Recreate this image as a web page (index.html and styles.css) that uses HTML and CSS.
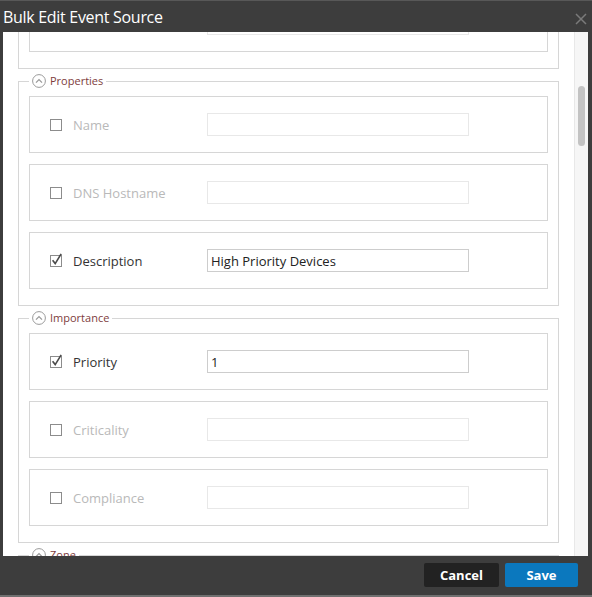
FILE: index.html
```html
<!DOCTYPE html>
<html>
<head>
<meta charset="utf-8">
<link rel="stylesheet" href="styles.css">
</head>
<body>
<div class="dialog">
  <header class="titlebar">
    <h1 class="title">Bulk Edit Event Source</h1>
    <svg class="close" width="12" height="12" viewBox="0 0 12 12"><path d="M1 1L11 11M11 1L1 11" stroke="#7a7a7a" stroke-width="1.5" fill="none"/></svg>
  </header>
  <div class="main">
    <div class="content">
      <fieldset class="group first">
        <legend><span class="leg"><svg width="14" height="14" viewBox="0 0 14 14"><circle cx="7" cy="7" r="6.4" fill="none" stroke="#9a9a9a"/><path d="M4 8.6L7 5.6L10 8.6" fill="none" stroke="#9a9a9a" stroke-width="1.3"/></svg></span></legend>
        <div class="row">
          <svg class="cb" width="12" height="12" viewBox="0 0 12 12"><rect x="0.5" y="0.5" width="11" height="11" fill="#fff" stroke="#8c8c8c"/></svg>
          <span class="label"></span>
          <input class="field" type="text" value="">
        </div>
      </fieldset>
      <fieldset class="group">
        <legend><span class="leg"><svg width="14" height="14" viewBox="0 0 14 14"><circle cx="7" cy="7" r="6.4" fill="none" stroke="#9a9a9a"/><path d="M4 8.6L7 5.6L10 8.6" fill="none" stroke="#9a9a9a" stroke-width="1.3"/></svg>Properties</span></legend>
        <div class="row">
          <svg class="cb" width="12" height="12" viewBox="0 0 12 12"><rect x="0.5" y="0.5" width="11" height="11" fill="#fff" stroke="#8c8c8c"/></svg>
          <span class="label">Name</span>
          <input class="field" type="text" value="">
        </div>
        <div class="row">
          <svg class="cb" width="12" height="12" viewBox="0 0 12 12"><rect x="0.5" y="0.5" width="11" height="11" fill="#fff" stroke="#8c8c8c"/></svg>
          <span class="label">DNS Hostname</span>
          <input class="field" type="text" value="">
        </div>
        <div class="row">
          <svg class="cb" width="12" height="12" viewBox="0 0 12 12"><rect x="0.5" y="0.5" width="11" height="11" fill="#fff" stroke="#8c8c8c"/><path d="M2.6 5.2L5.2 8.6L11.2 -1.2" fill="none" stroke="#4a4a4a" stroke-width="1.6"/></svg>
          <span class="label on">Description</span>
          <input class="field on" type="text" value="High Priority Devices">
        </div>
      </fieldset>
      <fieldset class="group">
        <legend><span class="leg"><svg width="14" height="14" viewBox="0 0 14 14"><circle cx="7" cy="7" r="6.4" fill="none" stroke="#9a9a9a"/><path d="M4 8.6L7 5.6L10 8.6" fill="none" stroke="#9a9a9a" stroke-width="1.3"/></svg>Importance</span></legend>
        <div class="row">
          <svg class="cb" width="12" height="12" viewBox="0 0 12 12"><rect x="0.5" y="0.5" width="11" height="11" fill="#fff" stroke="#8c8c8c"/><path d="M2.6 5.2L5.2 8.6L11.2 -1.2" fill="none" stroke="#4a4a4a" stroke-width="1.6"/></svg>
          <span class="label on">Priority</span>
          <input class="field on" type="text" value="1">
        </div>
        <div class="row">
          <svg class="cb" width="12" height="12" viewBox="0 0 12 12"><rect x="0.5" y="0.5" width="11" height="11" fill="#fff" stroke="#8c8c8c"/></svg>
          <span class="label">Criticality</span>
          <input class="field" type="text" value="">
        </div>
        <div class="row">
          <svg class="cb" width="12" height="12" viewBox="0 0 12 12"><rect x="0.5" y="0.5" width="11" height="11" fill="#fff" stroke="#8c8c8c"/></svg>
          <span class="label">Compliance</span>
          <input class="field" type="text" value="">
        </div>
      </fieldset>
      <fieldset class="group">
        <legend><span class="leg"><svg width="14" height="14" viewBox="0 0 14 14"><circle cx="7" cy="7" r="6.4" fill="none" stroke="#9a9a9a"/><path d="M4 8.6L7 5.6L10 8.6" fill="none" stroke="#9a9a9a" stroke-width="1.3"/></svg>Zone</span></legend>
        <div class="row">
          <svg class="cb" width="12" height="12" viewBox="0 0 12 12"><rect x="0.5" y="0.5" width="11" height="11" fill="#fff" stroke="#8c8c8c"/></svg>
          <span class="label"></span>
          <input class="field" type="text" value="">
        </div>
      </fieldset>
    </div>
    <div class="scrollbar"><div class="thumb"></div></div>
  </div>
  <footer class="footer">
    <button class="btn cancel">Cancel</button>
    <button class="btn save">Save</button>
  </footer>
</div>
</body>
</html>
```

FILE: styles.css
```css
html, body {
  margin: 0;
  padding: 0;
}
body {
  background: #3d3d3d;
  font-family: "Open Sans", "Noto Sans", sans-serif;
}
.dialog {
  width: 592px;
  height: 597px;
  display: flex;
  flex-direction: column;
  background: #3d3d3d;
}
.titlebar {
  height: 32px;
  flex: none;
  box-sizing: border-box;
  border-top: 1px solid #585858;
  display: flex;
  align-items: center;
  justify-content: space-between;
  padding: 0 5px 0 3px;
}
.title {
  margin: 0;
  font-size: 16px;
  font-weight: 400;
  color: #ffffff;
  letter-spacing: -0.3px;
  line-height: 22px;
}
.close {
  display: block;
  margin-top: 4px;
}
.main {
  height: 524px;
  flex: none;
  display: flex;
  padding: 0 4px 0 3px;
}
.content {
  flex: 1;
  background: #ffffff;
  overflow: hidden;
}
.scrollbar {
  width: 14px;
  flex: none;
  box-sizing: border-box;
  background: #f6f6f6;
  border-left: 1px solid #e8e8e8;
}
.thumb {
  margin: 54px 0 0 3px;
  width: 7px;
  height: 60px;
  border-radius: 4px;
  background: #c3c3c3;
}
.group {
  margin: 5px 0 0 15px;
  width: 541px;
  min-width: 0;
  box-sizing: border-box;
  border: 1px solid #d6d6d6;
  padding: 8px 10px 16px 10px;
}
.group.first {
  margin-top: -59px;
}
.group legend {
  padding: 0 3px;
  height: 14px;
}
.leg {
  display: flex;
  align-items: center;
  gap: 4px;
  height: 14px;
  font-size: 11px;
  line-height: 14px;
  color: #7e3d3d;
}
.leg svg {
  display: block;
  flex: none;
}
.row {
  height: 57px;
  box-sizing: border-box;
  border: 1px solid #d6d6d6;
  display: flex;
  align-items: center;
  padding-left: 20px;
}
.row + .row {
  margin-top: 11px;
}
.cb {
  display: block;
  flex: none;
  overflow: visible;
}
.label {
  margin-left: 11px;
  width: 134px;
  flex: none;
  font-size: 13px;
  color: #b9b9b9;
}
.label.on {
  color: #333333;
}
.field {
  width: 262px;
  height: 23px;
  box-sizing: border-box;
  border: 1px solid #e8e8e8;
  padding: 0 3px;
  margin: 0;
  font-family: "Open Sans", "Noto Sans", sans-serif;
  font-size: 13px;
  color: #222222;
  background: #ffffff;
  outline: none;
}
.field.on {
  border-color: #cdcdcd;
}
.footer {
  height: 41px;
  flex: none;
  box-sizing: border-box;
  border-bottom: 2px solid #707070;
  display: flex;
  justify-content: flex-end;
  align-items: flex-start;
  gap: 6px;
  padding: 7px 14px 0 0;
}
.btn {
  height: 24px;
  border: 0;
  border-radius: 2px;
  padding: 0;
  color: #ffffff;
  font-family: "Open Sans", "Noto Sans", sans-serif;
  font-weight: 700;
  font-size: 13px;
}
.cancel {
  width: 75px;
  background: #222222;
}
.save {
  width: 73px;
  background: #0b78be;
}
```
